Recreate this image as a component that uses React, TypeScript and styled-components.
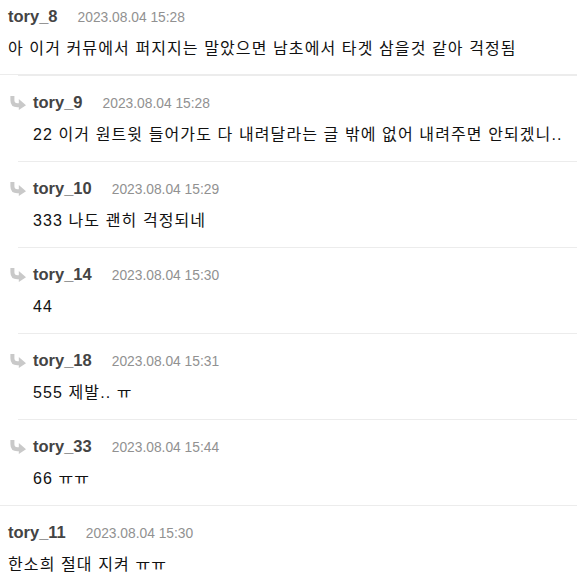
import React from "react";
import styled, { createGlobalStyle } from "styled-components";

const GlobalStyle = createGlobalStyle`
  html, body { margin: 0; padding: 0; background: #fff; }
  body { font-family: "Liberation Sans", "Noto Sans CJK KR", sans-serif; }
`;

const Thread = styled.div`
  width: 577px;
  margin-top: -10px;
`;

const Comment = styled.div`
  padding: 16px 8px 15px;
  border-bottom: 1px solid #ececec;
`;

const ReplyGroup = styled.div`
  border-bottom: 1px solid #ececec;
`;

const Reply = styled.div`
  margin-left: 18px;
  border-top: 1px solid #ececec;
  padding: 16px 0;
  display: flex;
  align-items: flex-start;
`;

const ReplyIcon = styled.svg`
  flex: none;
  width: 16px;
  height: 14px;
  margin: 4px 7px 0 -8px;
`;

const Body = styled.div`
  display: flex;
  flex-direction: column;
  min-width: 0;
`;

const Header = styled.div`
  display: flex;
  align-items: baseline;
  gap: 20px;
  height: 20px;
  line-height: 20px;
`;

const Name = styled.span`
  font-family: "Liberation Sans", Arial, sans-serif;
  font-weight: bold;
  font-size: 16.5px;
  line-height: 20px;
  color: #444;
`;

const Date = styled.span`
  font-family: "Liberation Sans", Arial, sans-serif;
  font-size: 13.8px;
  line-height: 20px;
  color: #919191;
`;

const Text = styled.div`
  margin-top: 12px;
  height: 21px;
  font-size: 16px;
  line-height: 21px;
  color: #111;
  white-space: nowrap;
  letter-spacing: 1.1px;
`;

type Item = { name: string; date: string; text: string };

const top: Item = {
  name: "tory_8",
  date: "2023.08.04 15:28",
  text: "아 이거 커뮤에서 퍼지지는 말았으면 남초에서 타겟 삼을것 같아 걱정됨",
};

const replies: Item[] = [
  { name: "tory_9", date: "2023.08.04 15:28", text: "22 이거 원트윗 들어가도 다 내려달라는 글 밖에 없어 내려주면 안되겠니.." },
  { name: "tory_10", date: "2023.08.04 15:29", text: "333 나도 괜히 걱정되네" },
  { name: "tory_14", date: "2023.08.04 15:30", text: "44" },
  { name: "tory_18", date: "2023.08.04 15:31", text: "555 제발.. ㅠ" },
  { name: "tory_33", date: "2023.08.04 15:44", text: "66 ㅠㅠ" },
];

const bottom: Item = {
  name: "tory_11",
  date: "2023.08.04 15:30",
  text: "한소희 절대 지켜 ㅠㅠ",
};

const Arrow = () => (
  <ReplyIcon viewBox="0 0 16 14">
    <path d="M2.4 0 V4.2 Q2.4 9.2 7.4 9.2 H10" fill="none" stroke="#c9c9c9" strokeWidth="4" />
    <polygon points="8.8,3 16,9.2 8.8,14" fill="#c9c9c9" />
  </ReplyIcon>
);

const Head = ({ item }: { item: Item }) => (
  <Header>
    <Name>{item.name}</Name>
    <Date>{item.date}</Date>
  </Header>
);

export default function App() {
  return (
    <>
      <GlobalStyle />
      <Thread>
        <Comment>
          <Head item={top} />
          <Text>{top.text}</Text>
        </Comment>
        <ReplyGroup>
          {replies.map((r) => (
            <Reply key={r.name}>
              <Arrow />
              <Body>
                <Head item={r} />
                <Text>{r.text}</Text>
              </Body>
            </Reply>
          ))}
        </ReplyGroup>
        <Comment>
          <Head item={bottom} />
          <Text>{bottom.text}</Text>
        </Comment>
      </Thread>
    </>
  );
}
